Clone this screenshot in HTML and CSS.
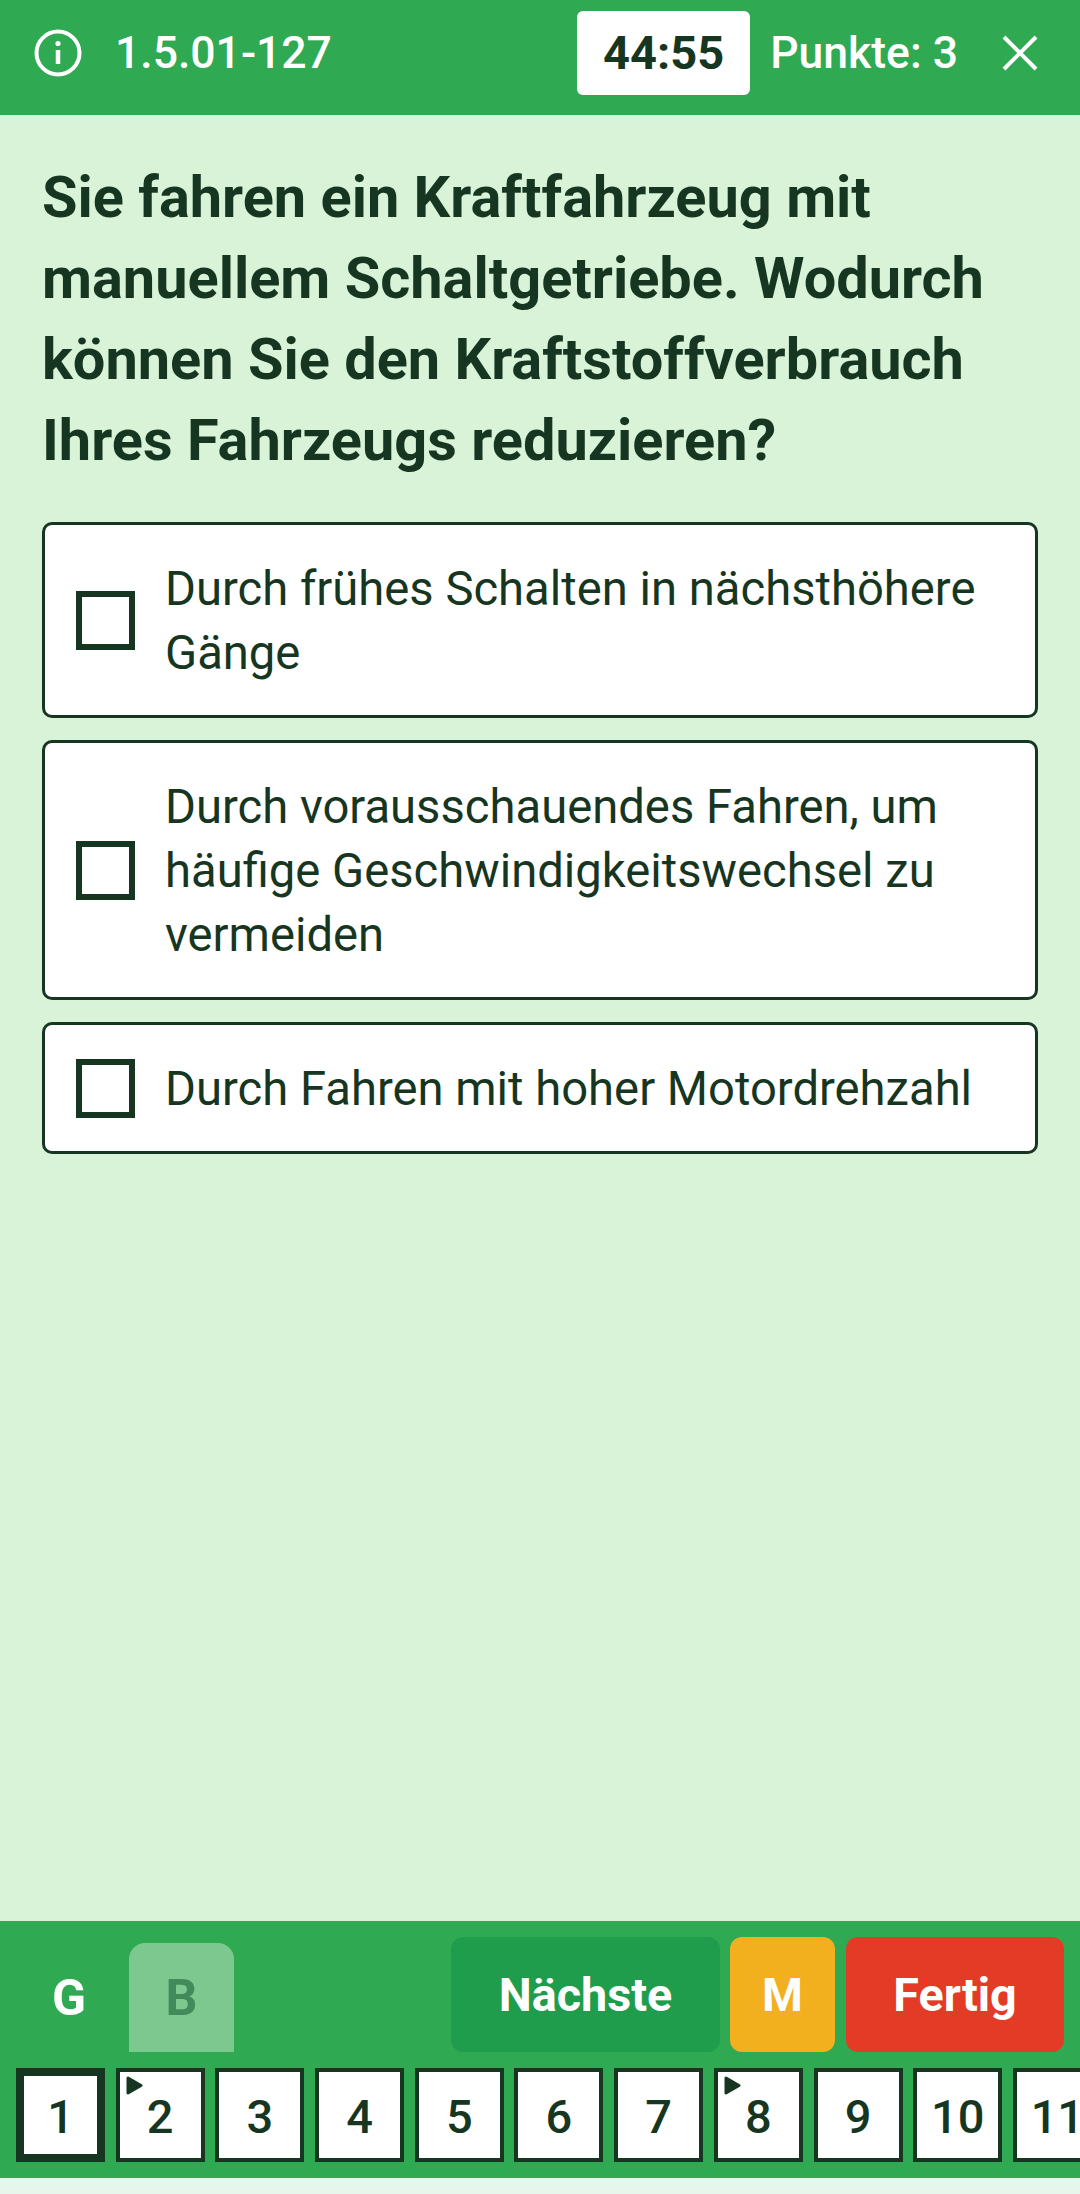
FILE: index.html
```html
<!DOCTYPE html>
<html lang="de">
<head>
  <meta charset="utf-8">
  <title>Prüfung</title>
  <link rel="stylesheet" href="styles.css">
</head>
<body>
  <div class="page">
    <header class="topbar">
      <svg class="info" viewBox="0 0 48 48" width="48" height="48" fill="none" stroke="#fff" stroke-width="4">
        <circle cx="24" cy="24" r="21.5"/>
        <path d="M24 21v14" stroke-width="4.5"/>
        <circle cx="24" cy="14.5" r="2.6" fill="#fff" stroke="none"/>
      </svg>
      <span class="version">1.5.01-127</span>
      <span class="timer">44:55</span>
      <span class="points">Punkte: 3</span>
      <svg class="close" viewBox="0 0 36 36" width="36" height="36" fill="none" stroke="#fff" stroke-width="4">
        <path d="M2 2l32 32M34 2L2 34"/>
      </svg>
    </header>

    <main class="content">
      <h1 class="question">Sie fahren ein Kraftfahrzeug mit manuellem Schaltgetriebe. Wodurch können Sie den Kraftstoffverbrauch Ihres Fahrzeugs reduzieren?</h1>
      <div class="answer"><span class="check"></span><span class="answer-text">Durch frühes Schalten in nächsthöhere Gänge</span></div>
      <div class="answer"><span class="check"></span><span class="answer-text">Durch vorausschauendes Fahren, um häufige Geschwindigkeitswechsel zu vermeiden</span></div>
      <div class="answer"><span class="check"></span><span class="answer-text">Durch Fahren mit hoher Motordrehzahl</span></div>
    </main>

    <footer class="bottombar">
      <div class="actions">
        <span class="tab">G</span>
        <span class="tab tab-active">B</span>
        <span class="btn btn-next">Nächste</span>
        <span class="btn btn-mark">M</span>
        <span class="btn btn-done">Fertig</span>
      </div>
      <div class="numbers">
        <span class="num num-current">1</span>
        <span class="num"><svg class="flag" viewBox="0 0 17 19" width="17" height="19"><path d="M2 2l13 7.5-13 7.5z" fill="#173621" stroke="#173621" stroke-width="3" stroke-linejoin="round"/></svg>2</span>
        <span class="num">3</span>
        <span class="num">4</span>
        <span class="num">5</span>
        <span class="num">6</span>
        <span class="num">7</span>
        <span class="num"><svg class="flag" viewBox="0 0 17 19" width="17" height="19"><path d="M2 2l13 7.5-13 7.5z" fill="#173621" stroke="#173621" stroke-width="3" stroke-linejoin="round"/></svg>8</span>
        <span class="num">9</span>
        <span class="num">10</span>
        <span class="num">11</span>
      </div>
    </footer>
    <div class="strip"></div>
  </div>
</body>
</html>
```

FILE: styles.css
```css
html, body {margin:0; padding:0;}
body {font-family:Roboto,"Liberation Sans",sans-serif; color:#173621; background:#d8f3d8;}

.page {display:flex; flex-direction:column; height:2194px; overflow:hidden;}

/* top bar */
.topbar {display:flex; align-items:center; height:115px; flex:none; background:#30aa52; color:#fff; padding:0 0 10px 34px; box-sizing:border-box;}
.info {flex:none;}
.version {font-size:44.5px; font-weight:500; margin-left:33px; flex:1;}
.timer {display:flex; align-items:center; justify-content:center; width:173px; height:84px; background:#fff; border-radius:6px; color:#173621; font-size:47px; font-weight:700;}
.points {font-size:44.5px; font-weight:500; margin-left:20px;}
.close {flex:none; margin:0 42px 0 44px;}

/* question */
.content {flex:1; padding:42px 42px 0;}
.question {margin:0 0 41px; font-size:57.7px; line-height:81px; font-weight:700; color:#173621; font-variant-ligatures:none;}
.answer {display:flex; align-items:center; background:#fff; border:3px solid #173621; border-radius:10px; padding:32px 30px 30px 31px; margin-bottom:22px; font-size:47.2px; line-height:64px;}
.check {flex:none; width:47px; height:47px; border:6px solid #173621; margin:-2px 30px 0 0;}
.answer-text {color:#173621;}

/* bottom bar */
.bottombar {flex:none; height:257px; background:#30aa52; overflow:hidden;}
.actions {display:flex; align-items:flex-end; height:131px; padding-left:32px; box-sizing:border-box;}
.tab {display:flex; align-items:center; justify-content:center; height:109px; font-size:50px; font-weight:700; color:#fff; border-radius:16px 16px 0 0;}
.tab:first-child {width:74px; margin-right:23px;}
.tab-active {width:105px; background:#7cc88f; color:#438a5a; margin-right:217px;}
.btn {display:flex; align-items:center; justify-content:center; height:115px; border-radius:12px; font-size:46.7px; font-weight:700; color:#fff; box-sizing:border-box;}
.btn-next {width:269px; background:#1f9d4d; margin-right:10px;}
.btn-mark {width:105px; background:#f2b01e; margin-right:11px;}
.btn-done {width:218px; background:#e33b26;}

.numbers {display:flex; gap:10.7px; padding:16px 0 0 16px;}
.num {position:relative; display:flex; flex:none; align-items:center; justify-content:center; width:89px; height:94px; box-sizing:border-box; border:4px solid #173621; padding-top:2px; background:#fff; font-size:47px; font-weight:500; color:#173621;}
.num-current {border-width:8px;}
.flag {position:absolute; left:6px; top:4px;}

.strip {flex:none; height:16px; background:#e6f6ec;}
```
